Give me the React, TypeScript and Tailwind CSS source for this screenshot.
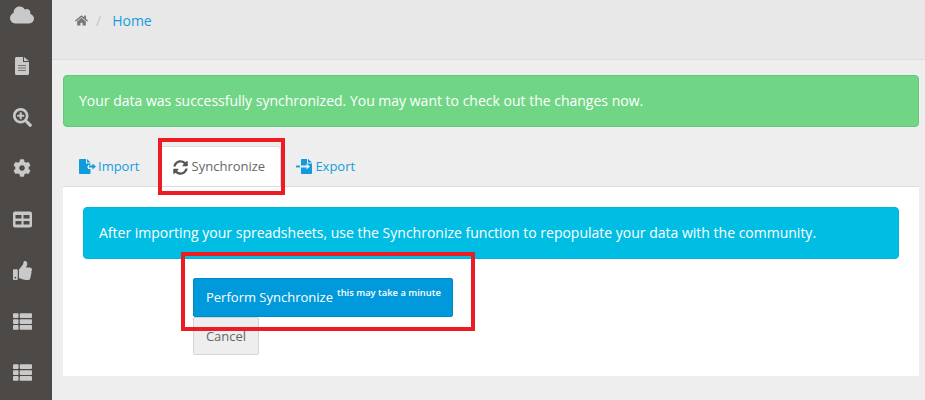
import { FaCloud, FaSearchPlus, FaCog, FaThumbsUp, FaThList, FaHome, FaSyncAlt } from 'react-icons/fa';

function FileDoc() {
  return (
    <svg width="14" height="18" viewBox="0 0 14 18" fill="#c9c9c9">
      <path d="M0 1.5C0 .7.7 0 1.5 0H8v5h6v11.500c0 .8-.7 1.500-1.500 1.500h-11C.7 18 0 17.300 0 16.500z" />
      <path d="M9 0l5 4H9z" />
      <path d="M3 8h8v1H3zM3 10.500h8v1H3zM3 13h8v1H3z" fill="#77736f" />
    </svg>
  );
}

function TableIcon() {
  return (
    <svg width="19" height="17" viewBox="0 0 19 17">
      <rect width="19" height="16" y="0.500" rx="2" fill="#c9c9c9" />
      <rect x="2.500" y="4" width="6" height="3.500" fill="#4d4946" />
      <rect x="10.500" y="4" width="6" height="3.500" fill="#4d4946" />
      <rect x="2.500" y="10" width="6" height="3.500" fill="#4d4946" />
      <rect x="10.500" y="10" width="6" height="3.500" fill="#4d4946" />
    </svg>
  );
}

function ImportIcon() {
  return (
    <svg width="18" height="15" viewBox="0 0 18 15" fill="#0f9bdc">
      <path d="M0 1c0-.6.4-1 1-1h6v4.500h4.500v1.500H9v1h-.5v2H9v1h2.500v4c0 .6-.4 1-1 1H1c-.6 0-1-.4-1-1z" />
      <path d="M8 0l3.500 3.500H8z" />
      <path d="M10 6.600h3.500V4.500l3.500 3-3.500 3V8.400H10z" />
    </svg>
  );
}

function ExportIcon() {
  return (
    <svg width="18" height="15" viewBox="0 0 18 15" fill="#0f9bdc">
      <path d="M5 1c0-.6.4-1 1-1h5v4.500h5V14c0 .6-.4 1-1 1H6c-.6 0-1-.4-1-1V8.400h5.500v2.100l3.500-3-3.500-3v2.100H5z" />
      <path d="M12 0l4 3.500h-4z" />
      <path d="M0 6.600h4v1.800H0z" />
    </svg>
  );
}

export default function App() {
  return (
    <div className="relative flex h-[400px] w-[925px] overflow-hidden bg-[#eeeeee] font-['Open_Sans',sans-serif] text-[14px]">
      {/* Sidebar */}
      <div className="flex w-[52px] shrink-0 flex-col items-center bg-[#4d4946] pr-[8px] pt-[3px] text-[#c9c9c9]">
        <div className="flex h-[24px] items-center"><FaCloud size={24} /></div>
        <div className="mt-[27px] flex h-[24px] items-center"><FileDoc /></div>
        <div className="mt-[27px] flex h-[24px] items-center"><FaSearchPlus size={19} /></div>
        <div className="mt-[27px] flex h-[24px] items-center"><FaCog size={18} /></div>
        <div className="mt-[27px] flex h-[24px] items-center"><TableIcon /></div>
        <div className="mt-[27px] flex h-[24px] items-center"><FaThumbsUp size={19} /></div>
        <div className="mt-[27px] flex h-[24px] items-center"><FaThList size={19} /></div>
        <div className="mt-[27px] flex h-[24px] items-center"><FaThList size={19} /></div>
      </div>

      {/* Main */}
      <div className="flex-1">
        <div className="flex h-[60px] items-start border-b border-[#dddddd] bg-[#e8e8e8] pl-[23px] pt-[10px]">
          <FaHome size={13} className="mt-[4px] text-[#777777]" />
          <span className="ml-[8px] text-[#c4c4c4]">/</span>
          <a className="ml-[11px] text-[#149ddd]">Home</a>
        </div>

        <div className="pl-[11px] pr-[6px]">
          <div className="mt-[15px] flex h-[52px] items-center rounded-[4px] border border-[#66c67a] bg-[#70d686] pb-[1px] pl-[15px] text-white">
            Your data was successfully synchronized. You may want to check out the changes now.
          </div>

          {/* Tabs */}
          <div className="mt-[19px] flex h-[40px] items-stretch">
            <a className="ml-[16px] flex items-center gap-[1px] pr-[20px] pt-[1px] text-[13px] text-[#149ddd]">
              <ImportIcon /> Import
            </a>
            <a className="flex w-[122px] items-center justify-center gap-[4px] rounded-t-[4px] border border-b-0 border-[#dddddd] bg-white pr-[3px] pt-[1px] text-[13px] text-[#666666]">
              <FaSyncAlt size={15} className="text-[#555555]" /> Synchronize
            </a>
            <a className="ml-[15px] flex items-center gap-[1px] pt-[1px] text-[13px] text-[#149ddd]">
              <ExportIcon /> Export
            </a>
          </div>

          {/* Panel */}
          <div className="h-[190px] border-t border-[#dddddd] bg-white px-[20px] pt-[20px]">
            <div className="flex h-[52px] items-center rounded-[4px] border border-[#00b4d8] bg-[#00bee3] pb-[1px] pl-[15px] text-white">
              After importing your spreadsheets, use the Synchronize function to repopulate your data with the community.
            </div>
            <div className="ml-[110px] mt-[19px] flex w-[260px] flex-col items-start">
              <button className="flex h-[39px] w-[260px] items-center rounded-[2px] border border-[#0089c4] bg-[#0099dc] pl-[12px] text-[13px] text-white">
                Perform Synchronize
                <span className="relative top-[-4px] ml-[4px] text-[9.4px] font-semibold">this may take a minute</span>
              </button>
              <button className="h-[38px] w-[66px] rounded-[2px] border border-[#d5d5d5] bg-[#eeeeee] pt-[1px] text-[13px] text-[#666666]">
                Cancel
              </button>
            </div>
          </div>
        </div>
      </div>

      {/* Annotation boxes */}
      <div className="absolute left-[158px] top-[138px] h-[57px] w-[127px] border-[4px] border-[#ed1c24]" />
      <div className="absolute left-[181px] top-[252px] h-[79px] w-[294px] border-[4px] border-[#ed1c24]" />
    </div>
  );
}
